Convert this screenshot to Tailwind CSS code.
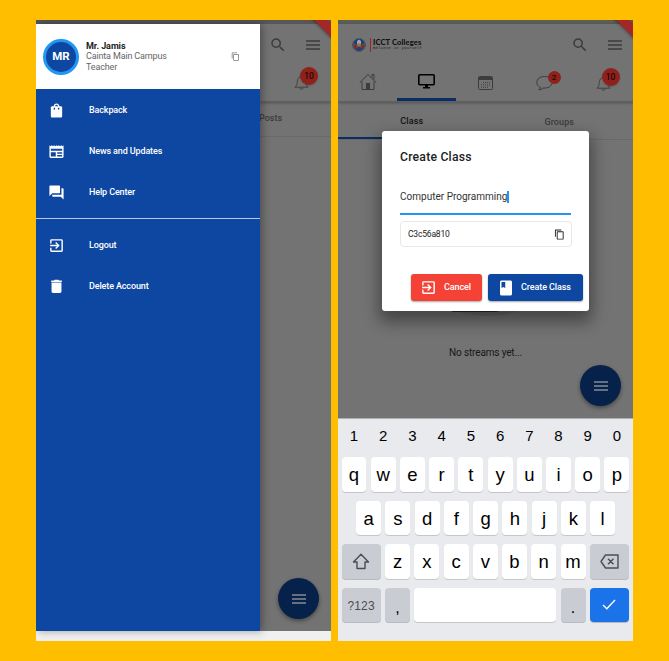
<!DOCTYPE html>
<html lang="en">
<head>
<meta charset="utf-8">
<title>ICCT Colleges</title>
<script src="https://cdn.jsdelivr.net/npm/@tailwindcss/browser@4"></script>
</head>
<body class="bg-[#ffbf00] font-['Roboto',sans-serif]">
<svg class="hidden">
  <symbol id="menu" viewBox="0 0 14 10"><path d="M0 1h14M0 5h14M0 9h14" stroke="currentColor" stroke-width="1.4"/></symbol>
  <symbol id="search" viewBox="0 0 24 24"><path fill="currentColor" d="M15.5 14h-.79l-.28-.27A6.47 6.47 0 0 0 16 9.500 6.500 6.500 0 1 0 9.500 16c1.610 0 3.090-.59 4.230-1.570l.27.28v.79l5 4.990L20.490 19l-4.990-5zm-6 0C7.010 14 5 11.990 5 9.500S7.010 5 9.500 5 14 7.010 14 9.500 11.990 14 9.500 14z"/></symbol>
  <symbol id="copy" viewBox="0 0 24 24"><path fill="currentColor" d="M16 1H4c-1.100 0-2 .9-2 2v14h2V3h12V1zm3 4H8c-1.100 0-2 .9-2 2v14c0 1.100.9 2 2 2h11c1.100 0 2-.9 2-2V7c0-1.100-.9-2-2-2zm0 16H8V7h11v14z"/></symbol>
  <symbol id="exit" viewBox="0 0 24 24"><path fill="currentColor" d="M10.090 15.590L11.500 17l5-5-5-5-1.410 1.410L12.670 11H3v2h9.670l-2.580 2.590zM19 3H5a2 2 0 0 0-2 2v4h2V5h14v14H5v-4H3v4a2 2 0 0 0 2 2h14c1.100 0 2-.9 2-2V5c0-1.100-.9-2-2-2z"/></symbol>
  <symbol id="bell" viewBox="0 0 16 16"><path fill="none" stroke="currentColor" stroke-width=".9" d="M1 13.200C3 11.500 3.200 9.500 3.300 7.500 3.400 4.500 5 2.500 7.500 2.500s4.100 2 4.200 5c.1 2 .3 4 2.300 5.700zM5.600 13.500c.2 2.300 3.600 2.300 3.800 0M6.800 2.400c0-1.200 1.400-1.200 1.400 0"/></symbol>
</svg>
<div class="flex w-[669px] h-[661px] pt-5 pl-9 gap-[7px] overflow-hidden">

  <!-- Navigation drawer -->
  <section class="relative flex flex-col w-[295px] h-[621px] overflow-hidden bg-[#737373]">
    <div class="h-1 shrink-0 bg-[#575757]"></div>
    <div class="flex h-[607px]">
      <aside class="w-[224px] shrink-0 bg-[#0d47a1] text-white shadow-[2px_0_8px_rgba(0,0,0,.35)] z-10">
        <header class="flex h-[65px] bg-white items-center pl-[7px] pr-[20px]">
          <div class="size-9 rounded-full border-[3px] border-[#2196f3] bg-[#0d47a1] flex items-center justify-center text-[11.500px] font-bold">MR</div>
          <div class="ml-[7px] leading-[10.300px] text-[9px] text-[#666] whitespace-nowrap">
            <div class="font-bold text-[#222] tracking-[-.05px]">Mr. Jamis</div>
            <div class="tracking-[-.15px]">Cainta Main Campus</div>
            <div class="tracking-[-.15px]">Teacher</div>
          </div>
          <svg class="size-[9px] ml-auto text-[#777]"><use href="#copy"/></svg>
        </header>
        <nav class="text-[9px] font-medium tracking-[-.13px] pt-[1px]">
          <div class="flex items-center h-[41px] pl-[12px] gap-[24px]"><svg class="size-[17px] -mt-[1px]" viewBox="0 0 24 24"><path fill="currentColor" d="M18 6h-2c0-2.210-1.790-4-4-4S8 3.790 8 6H6c-1.100 0-2 .9-2 2v12c0 1.100.9 2 2 2h12c1.100 0 2-.9 2-2V8c0-1.100-.9-2-2-2zm-8 4c0 .55-.45 1-1 1s-1-.45-1-1V8h2v2zm2-6c1.100 0 2 .9 2 2h-4c0-1.100.9-2 2-2zm4 6c0 .55-.45 1-1 1s-1-.45-1-1V8h2v2z"/></svg>Backpack</div>
          <div class="flex items-center h-[41px] pl-[12px] gap-[24px]"><svg class="size-[17px]" viewBox="0 0 24 24"><path fill="currentColor" fill-rule="evenodd" d="M22 3l-1.670 1.670L18.670 3 17 4.670 15.330 3l-1.660 1.670L12 3l-1.670 1.670L8.670 3 7 4.670 5.330 3 3.670 4.670 2 3v16c0 1.100.9 2 2 2h16c1.100 0 2-.9 2-2zM4 13h7v6H4zm9 4h7v2h-7zm0-4h7v2h-7zM4 8h16v3H4z"/></svg>News and Updates</div>
          <div class="flex items-center h-[41px] pl-[12px] gap-[24px]"><svg class="size-[17px]" viewBox="0 0 24 24"><path fill="currentColor" d="M21 6h-2v9H6v2c0 .55.45 1 1 1h11l4 4V7c0-.55-.45-1-1-1zm-4 6V3c0-.55-.45-1-1-1H3c-.55 0-1 .45-1 1v14l4-4h10c.55 0 1-.45 1-1z"/></svg>Help Center</div>
          <div class="h-px mt-[5px] mb-[6px] bg-[#b6c8e3]"></div>
          <div class="flex items-center h-[41px] pl-[12px] gap-[24px]"><svg class="size-[17px]"><use href="#exit"/></svg>Logout</div>
          <div class="flex items-center h-[41px] pl-[12px] gap-[24px]"><svg class="size-[17px]" viewBox="0 0 24 24"><path fill="currentColor" d="M5 19c0 1.100.9 2 2 2h10c1.100 0 2-.9 2-2V6.500H5zM19.500 3.500h-4l-1-1h-5l-1 1h-4v2h15z"/></svg>Delete Account</div>
        </nav>
      </aside>
      <main class="flex-1 overflow-hidden text-[#3c3c3c]">
        <div class="h-[78px] border-b border-[#606060] shadow-[0_1px_3px_rgba(0,0,0,.3)]">
          <div class="flex items-center h-[41px] pl-[9px]">
            <svg class="size-[18px]"><use href="#search"/></svg>
            <svg class="w-[14px] h-[10px] ml-[19px]"><use href="#menu"/></svg>
          </div>
          <div class="relative w-4 ml-[34px] mt-[9px]"><svg class="size-4"><use href="#bell"/></svg>
            <span class="absolute left-[6px] -top-[7px] size-[18px] rounded-full bg-[#8f211a] text-black text-[8.500px] flex items-center justify-center shadow">10</span></div>
        </div>
        <div class="h-[35px] border-b border-[#6a6a6a] flex items-center text-[9px] font-medium -ml-[1px]">Posts</div>
      </main>
    </div>
    <div class="h-[10px] bg-[#f0f0f0]"></div>
    <div class="absolute -right-[16px] -top-[2px] w-[48px] h-[9px] rotate-45 bg-[#a62526] shadow-[0_1px_3px_rgba(0,0,0,.4)]"></div>
    <button class="absolute left-[242px] top-[558px] size-[41px] rounded-full bg-[#06214a] text-[#858b95] flex items-center justify-center shadow-[0_2px_4px_rgba(0,0,0,.4)]"><svg class="w-[14px] h-[10px]"><use href="#menu"/></svg></button>
  </section>

  <!-- Class screen with dialog and keyboard -->
  <section class="relative flex flex-col w-[295px] h-[621px] overflow-hidden bg-[#737373] text-[#3c3c3c]">
    <div class="h-1 shrink-0 bg-[#5b5d57]"></div>
    <div class="h-[78px] shrink-0 border-b border-[#606060] shadow-[0_1px_3px_rgba(0,0,0,.3)]">
      <div class="flex items-center h-[41px] pl-[14px]">
        <svg class="size-[14px]" viewBox="0 0 14 14"><circle cx="7" cy="7" r="6.300" fill="#555768" stroke="#353a4e" stroke-dasharray="1 .5"/><path d="M2 6a5 5 0 0 1 10 0z" fill="#173d72"/><path d="M1 8l4-2-1 5zM13 8L9 6l1 5z" fill="#8c2420"/><path d="M5 3l2-1.500L9 3v3H5z" fill="#9ba4ae"/><circle cx="7" cy="7" r="1.800" fill="#9b7738"/><path d="M3 11l4-2.500 4 2.500-4 2z" fill="#263e6b"/></svg>
        <div class="w-px h-[14px] ml-[4px] bg-[#9e2426]"></div>
        <div class="ml-[2px] whitespace-nowrap font-['Lato',sans-serif]"><div class="text-[7.600px] leading-[8px] font-black text-[#111] tracking-[.12px]">ICCT Colleges</div><div class="text-[4px] leading-[5px] font-['Liberation_Mono',monospace] text-[#222] tracking-[.18px]">Believe in yourself</div></div>
        <svg class="size-[18px] ml-auto"><use href="#search"/></svg>
        <svg class="w-[14px] h-[10px] ml-[19px] mr-[11px]"><use href="#menu"/></svg>
      </div>
      <div class="grid grid-cols-5 h-[36px]">
        <div class="flex items-center justify-center"><svg class="size-[18px] -mt-[2px]" viewBox="0 0 18 18" fill="none" stroke="currentColor"><path d="M.8 9.500L9 1.500l8.200 8M3 8.500v8h12v-8M13 4.500v-3h2v5"/><path d="M7 10h4v6H7z" fill="currentColor" stroke="none"/></svg></div>
        <div class="flex items-center justify-center border-b-[3px] border-[#0a2d63] text-black"><svg class="w-[17px] h-[15px]" viewBox="0 0 17 15"><rect x=".8" y=".8" width="15.400" height="10" rx="1" fill="none" stroke="currentColor" stroke-width="1.600"/><path d="M7 11h3v2h2v1.500H5V13h2z" fill="currentColor"/></svg></div>
        <div class="flex items-center justify-center"><svg class="w-[15px] h-[14px]" viewBox="0 0 15 14"><rect x=".5" y=".5" width="14" height="13" rx="1" fill="none" stroke="currentColor"/><path d="M1 1h13v3H1z" fill="currentColor"/><path d="M5 6.500h8M3 8.800h10M3 11.200h7" stroke="currentColor" stroke-dasharray="1 1"/></svg></div>
        <div class="flex items-center justify-center"><div class="relative mr-[1px]"><svg class="w-[17px] h-[16px]" viewBox="0 0 17 16"><path d="M8.500 1.500C4 1.500.8 4 .8 7.300c0 2.200 1.400 4 3.500 5-.1 1.200-.7 1.900-1.500 2.500 1.800 0 3.200-.7 4.200-1.800 5 .6 9.200-1.900 9.200-5.700C16.200 4 13 1.500 8.500 1.500z" fill="none" stroke="currentColor"/></svg><span class="absolute left-[12px] -top-[4px] size-[13px] rounded-full bg-[#8f211a] text-black text-[8px] flex items-center justify-center">2</span></div></div>
        <div class="flex items-center justify-center"><div class="relative"><svg class="size-4"><use href="#bell"/></svg><span class="absolute left-[6px] -top-[7px] size-[18px] rounded-full bg-[#8f211a] text-black text-[8.500px] flex items-center justify-center shadow">10</span></div></div>
      </div>
    </div>
    <div class="grid grid-cols-2 h-[38px] shrink-0 pt-[4px] text-[9px] font-medium tracking-[.1px] text-center items-center border-b border-[#686868]"><div class="h-full flex items-center justify-center pt-[1px] text-[#111] border-b-2 border-[#0a2d63]">Class</div><div>Groups</div></div>
    <div class="relative h-[278px] shrink-0">
      <div class="absolute left-[93px] top-[120px] w-[112px] h-[56px] rounded-[50%] bg-[#686868]"></div>
      <div class="absolute left-[112px] top-[145px] w-[50px] h-[27px] rounded bg-[#242c36]"></div>
      <div class="pt-[201px] text-[10px] tracking-[-.15px] text-center text-[#181818] leading-6">No streams yet...</div>
      <button class="absolute left-[242px] top-[225px] size-[41px] rounded-full bg-[#06214a] text-[#858b95] flex items-center justify-center shadow-[0_2px_4px_rgba(0,0,0,.4)]"><svg class="w-[14px] h-[10px]"><use href="#menu"/></svg></button>
    </div>
    <div class="absolute -right-[16px] -top-[2px] w-[48px] h-[9px] rotate-45 bg-[#a62526] shadow-[0_1px_3px_rgba(0,0,0,.4)]"></div>

    <!-- Dialog -->
    <div class="absolute left-[44px] top-[111px] w-[207px] h-[180px] rounded-[3px] bg-white px-[18px] pt-[18px] text-[#222] shadow-[0_8px_16px_3px_rgba(0,0,0,.4)]">
      <h1 class="text-[12.200px] leading-4 font-medium tracking-[.22px]">Create Class</h1>
      <div class="flex items-center h-[50px] pt-[15px] w-[171px] border-b-2 border-[#2196f3] text-[10px] tracking-[.01px] text-[#333]">Computer Programming<span class="w-[1.500px] h-[12px] bg-[#2196f3]"></span></div>
      <div class="flex items-center justify-between w-[172px] h-[26px] mt-[6px] border border-[#e8e8e8] rounded px-[7px] text-[8.500px] tracking-[-.18px] pr-[6px]">C3c56a810<svg class="size-[11px]"><use href="#copy"/></svg></div>
      <div class="flex justify-end gap-[6px] mt-[27px] -mr-[12px] text-white text-[9px] font-medium tracking-[-.1px]">
        <button class="flex items-center w-[71px] h-[27px] rounded-[3px] bg-[#f44336] pl-[9px] gap-[7px] shadow-[0_1px_2px_rgba(0,0,0,.35)]"><svg class="size-[17px] shrink-0"><use href="#exit"/></svg>Cancel</button>
        <button class="flex items-center w-[95px] h-[27px] rounded-[3px] bg-[#0d47a1] pl-[9px] gap-[6px] whitespace-nowrap shadow-[0_1px_2px_rgba(0,0,0,.35)]"><svg class="size-[18px] shrink-0" viewBox="0 0 24 24"><path fill="currentColor" fill-rule="evenodd" d="M18 2H6c-1.100 0-2 .9-2 2v16c0 1.100.9 2 2 2h12c1.100 0 2-.9 2-2V4c0-1.100-.9-2-2-2zM6 4h5v8l-2.500-1.500L6 12z"/></svg>Create Class</button>
      </div>
    </div>

    <!-- Keyboard -->
    <div class="relative flex-1 bg-[#e8eaed] border-t border-[#b0b0b0] px-[3.500px] text-black text-[18.500px] font-['Liberation_Sans',sans-serif]">
      <div id="r0" class="flex h-[38px] text-[15px] gap-[4.250px]"></div>
      <div id="r1" class="flex gap-[4.250px]"></div>
      <div id="r2" class="flex gap-[4.250px] pl-[14.600px] mt-[9px]"></div>
      <div class="flex gap-[4.250px] mt-[9px]">
        <div class="flex items-center justify-center w-[39.250px] h-[34.500px] rounded-[4px] bg-[#caccd3] shadow-[0_1px_0_#b9bbc0]"><svg class="w-[18px] h-[17px]" viewBox="0 0 18 17"><path d="M9 1.200L16.500 9H13v6.500H5V9H1.500z" fill="none" stroke="#4b4d52" stroke-width="1.400" stroke-linejoin="round"/></svg></div>
        <div id="r3" class="flex gap-[4.250px]"></div>
        <div class="flex items-center justify-center w-[39.250px] h-[34.500px] rounded-[4px] bg-[#caccd3] shadow-[0_1px_0_#b9bbc0]"><svg class="w-[19px] h-[15px]" viewBox="0 0 19 15" fill="none" stroke="#4b4d52" stroke-width="1.400" stroke-linejoin="round"><path d="M5.500 1H18v13H5.500L1 7.500zM8 4.700l5.500 5.600M13.500 4.700L8 10.300"/></svg></div>
      </div>
      <div class="flex gap-[4.250px] mt-[9px]">
        <div class="flex items-center justify-center w-[39.250px] h-[34.500px] rounded-[4px] bg-[#caccd3] shadow-[0_1px_0_#b9bbc0] text-[12px] text-[#4b4d52] tracking-[.1px] pt-[2px]">?123</div>
        <div class="flex items-center justify-center w-[25px] h-[34.500px] rounded-[4px] bg-[#caccd3] shadow-[0_1px_0_#b9bbc0] text-[16px] pt-[7px]">,</div>
        <div class="w-[142px] h-[34.500px] rounded-[4px] bg-white shadow-[0_1px_0_#c4c6ca]"></div>
        <div class="flex items-center justify-center w-[25px] h-[34.500px] rounded-[4px] bg-[#caccd3] shadow-[0_1px_0_#b9bbc0] text-[16px] pt-[6px]">.</div>
        <div class="flex items-center justify-center w-[39.250px] h-[34.500px] rounded-[4px] bg-[#1a73e8] shadow-[0_1px_0_#b9bbc0]"><svg class="w-[14px] h-[11px]" viewBox="0 0 14 11"><path d="M1 6l3.800 3.700L13 1" fill="none" stroke="#fff" stroke-width="1.400"/></svg></div>
      </div>
    </div>
  </section>
</div>
<script>
const fill = (id, keys, cls) => document.getElementById(id).innerHTML = [...keys].map(k => `<div class="${cls}">${k}</div>`).join('');
const key = "flex items-center justify-center w-[25px] h-[34.500px] rounded-[4px] bg-white shadow-[0_1px_0_#c4c6ca] pt-[2px]";
fill('r0', '1234567890', "flex items-center justify-center w-[25px] h-[35px]");
fill('r1', 'qwertyuiop', key);
fill('r2', 'asdfghjkl', key);
fill('r3', 'zxcvbnm', key);
</script>
</body>
</html>
